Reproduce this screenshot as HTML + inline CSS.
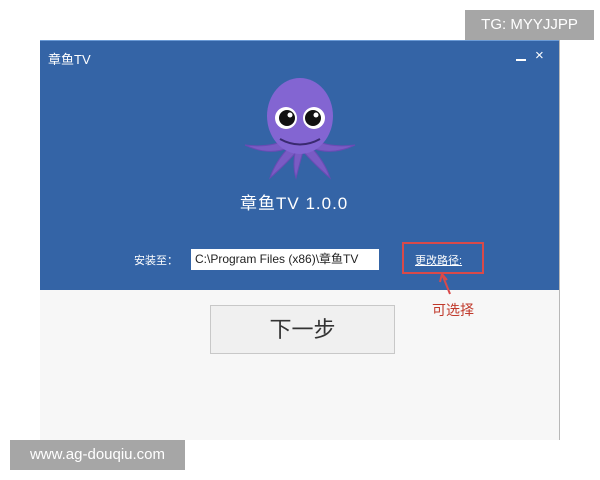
<!DOCTYPE html>
<html><head><meta charset="utf-8"><style>
body{margin:0;width:600px;height:480px;background:#fff;position:relative;overflow:hidden;font-family:"Liberation Sans","Noto Sans CJK SC",sans-serif}
.a{position:absolute}
</style></head><body>
<div class="a" style="left:40px;top:40px;width:519px;height:250px;background:#3464a6;border-top:1px solid #6a9ad6"></div>
<div class="a" style="left:40px;top:290px;width:519px;height:150px;background:#f7f7f7"></div>
<div class="a" style="left:559px;top:40px;width:1px;height:400px;background:#b8b8b8"></div>
<div class="a" style="left:48px;top:49px;color:#fff;font-size:13px">章鱼TV</div>
<div class="a" style="left:516px;top:59px;width:10px;height:2px;background:#fff"></div>
<div class="a" style="left:535px;top:47px;color:#fff;font-size:15px">×</div>
<svg class="a" style="left:240px;top:70px" width="120" height="110" viewBox="0 0 120 110">
<g fill="#7a5bc4" stroke="#6a4bb4" stroke-width="1">
<path d="M45 70 Q30 78 5 75 Q28 86 48 78Z"/>
<path d="M75 70 Q90 78 115 75 Q92 86 72 78Z"/>
<path d="M50 76 Q35 92 30 108 Q48 92 58 80Z"/>
<path d="M70 76 Q85 92 90 108 Q72 92 62 80Z"/>
<path d="M56 78 Q52 95 56 108 Q60 92 64 78Z"/>
</g>
<ellipse cx="60" cy="46" rx="33" ry="38" fill="#8365d2"/>
<circle cx="46" cy="48" r="11" fill="#fff"/><circle cx="74" cy="48" r="11" fill="#fff"/>
<circle cx="47" cy="48" r="8" fill="#111"/><circle cx="73" cy="48" r="8" fill="#111"/>
<circle cx="50" cy="45" r="2.5" fill="#fff"/><circle cx="76" cy="45" r="2.5" fill="#fff"/>
<path d="M40 69 Q60 80 80 69" stroke="#3a2a70" stroke-width="2" fill="none"/>
</svg>
<div class="a" style="left:240px;top:189px;color:#fff;font-size:17px;letter-spacing:1px">章鱼TV 1.0.0</div>
<div class="a" style="left:134px;top:252px;color:#fff;font-size:11px">安装至：</div>
<div class="a" style="left:191px;top:249px;width:188px;height:21px;background:#fff;font-size:12px;line-height:21px;color:#222;text-indent:4px">C:\Program Files (x86)\章鱼TV</div>
<div class="a" style="left:402px;top:242px;width:78px;height:28px;border:2px solid #d94a4a"></div>
<div class="a" style="left:415px;top:252px;color:#fff;font-size:11px;text-decoration:underline">更改路径:</div>
<svg class="a" style="left:438px;top:272px" width="20" height="26"><path d="M4 2 L12 22 M4 2 L2 10 M4 2 L9 8" stroke="#d94a4a" stroke-width="2" fill="none"/></svg>
<div class="a" style="left:432px;top:300px;color:#c0392b;font-size:14px">可选择</div>
<div class="a" style="left:210px;top:305px;width:183px;height:47px;background:#f0f0f0;border:1px solid #c8c8c8;text-align:center;line-height:47px;font-size:22px;color:#333">下一步</div>
<div class="a" style="left:465px;top:10px;width:129px;height:30px;background:#a6a6a6;color:#fff;font-size:15px;line-height:30px;text-align:center">TG: MYYJJPP</div>
<div class="a" style="left:10px;top:440px;width:175px;height:30px;background:#a6a6a6;color:#fff;font-size:15px;line-height:30px;text-align:center">www.ag-douqiu.com</div>
</body></html>
